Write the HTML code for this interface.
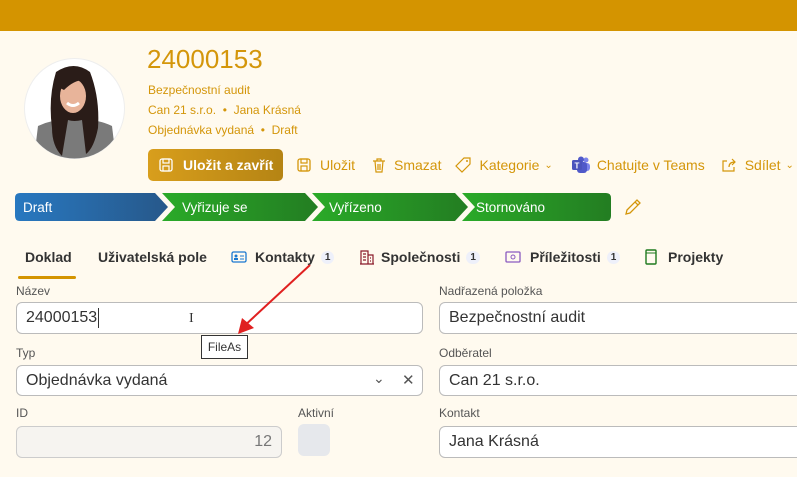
<!DOCTYPE html>
<html><head><meta charset="utf-8"><style>
*{box-sizing:border-box;margin:0;padding:0}
body{width:797px;height:477px;overflow:hidden;background:#fffaef;font-family:"Segoe UI","Liberation Sans",sans-serif;position:relative;color:#333}
.a{position:absolute;white-space:nowrap}
.gold{color:#d4960a}
.lbl{font-size:12px;color:#555}
.inp{position:absolute;border:1px solid #bbb;border-radius:6px;background:#fff;font-size:16px;color:#333;padding-left:9px;display:flex;align-items:center}
.tab{font-size:14px;font-weight:bold;color:#333}
.badge{display:inline-block;background:#eef0fa;border-radius:7px;font-size:10px;padding:1px 4px;margin-left:6px;color:#333;vertical-align:2px}
</style></head><body>
<div class="a" style="left:0;top:0;width:797px;height:31px;background:#d49400"></div>

<svg class="a" style="left:24px;top:58px" width="101" height="101" viewBox="0 0 101 101">
<defs><clipPath id="c"><circle cx="50.5" cy="50.5" r="50"/></clipPath></defs>
<circle cx="50.5" cy="50.5" r="50" fill="#fff" stroke="#eee"/>
<g clip-path="url(#c)">
<path d="M10 101 L14 68 Q30 60 50 62 Q72 60 88 68 L92 101Z" fill="#7a7a7a"/>
<path d="M32 14 Q50 2 66 14 Q76 40 74 70 Q70 90 62 96 L58 62 Q50 64 44 62 L38 98 Q28 88 28 70 Q24 40 32 14Z" fill="#2a1c18"/>
<ellipse cx="49" cy="38" rx="13" ry="17" fill="#e8b49a"/>
<path d="M36 30 Q40 16 60 22 Q50 22 40 32Z" fill="#2a1c18"/>
<path d="M43 45 Q49 50 55 45" stroke="#fff" stroke-width="3" fill="none"/>
</g></svg>

<div class="a gold" style="left:147px;top:44px;font-size:26px">24000153</div>
<div class="a gold" style="left:148px;top:83px;font-size:12px">Bezpečnostní audit</div>
<div class="a gold" style="left:148px;top:103px;font-size:12px">Can 21 s.r.o. &nbsp;•&nbsp; Jana Krásná</div>
<div class="a gold" style="left:148px;top:123px;font-size:12px">Objednávka vydaná &nbsp;•&nbsp; Draft</div>

<div class="a" style="left:148px;top:149px;width:135px;height:32px;border-radius:5px;background:linear-gradient(90deg,#d89e1c,#b58414);color:#fff;font-size:14px;font-weight:bold;display:flex;align-items:center;padding-left:10px">
<svg width="16" height="16" viewBox="0 0 16 16" style="margin-right:9px"><rect x="2" y="2" width="12" height="12" rx="2" fill="none" stroke="#fff" stroke-width="1.3"/><rect x="5" y="2" width="6" height="4" fill="none" stroke="#fff" stroke-width="1.2"/><rect x="5" y="9" width="6" height="5" fill="none" stroke="#fff" stroke-width="1.2"/></svg>Uložit a zavřít</div>

<div class="a gold" style="left:296px;top:156px;font-size:14px;display:flex;align-items:center">
<svg width="16" height="16" viewBox="0 0 16 16" style="margin-right:8px"><rect x="2" y="2" width="12" height="12" rx="2" fill="none" stroke="#d4960a" stroke-width="1.3"/><rect x="5" y="2" width="6" height="4" fill="none" stroke="#d4960a" stroke-width="1.2"/><rect x="5" y="9" width="6" height="5" fill="none" stroke="#d4960a" stroke-width="1.2"/></svg>Uložit
<svg width="16" height="16" viewBox="0 0 16 16" style="margin:0 7px 0 16px"><path d="M2 4h12M6 4V2h4v2M4 4l1 11h6l1-11M7 7v6M9 7v6" fill="none" stroke="#d4960a" stroke-width="1.2"/></svg>Smazat
<svg width="16" height="16" viewBox="0 0 16 16" style="margin:0 8px 0 14px"><path d="M9 1h6v6l-8 8-6-6z" fill="none" stroke="#d4960a" stroke-width="1.2"/><circle cx="12" cy="4" r="1" fill="#d4960a"/></svg>Kategorie <span style="font-size:10px;margin-left:5px">⌄</span>
<svg width="20" height="18" viewBox="0 0 20 18" style="margin:0 6px 0 18px"><circle cx="15" cy="4" r="2.5" fill="#7b83eb"/><rect x="11" y="7" width="8" height="8" rx="3" fill="#7b83eb"/><circle cx="10" cy="3.5" r="3" fill="#5059c9"/><rect x="6" y="6" width="10" height="11" rx="3" fill="#5059c9"/><rect x="1" y="4" width="10" height="10" rx="1.5" fill="#4b53bc"/><text x="6" y="12.5" font-size="8" fill="#fff" text-anchor="middle" font-family="Liberation Sans" font-weight="bold">T</text></svg>Chatujte v Teams
<svg width="16" height="16" viewBox="0 0 16 16" style="margin:0 8px 0 16px"><path d="M6 4H2v10h11v-4M8 10q0-5 6-5M11 2l3 3-3 3" fill="none" stroke="#d4960a" stroke-width="1.2"/></svg>Sdílet <span style="font-size:10px;margin-left:5px">⌄</span></div>

<svg class="a" style="left:15px;top:193px" width="600" height="28" viewBox="0 0 600 28">
<defs>
<linearGradient id="b" x1="0" x2="1"><stop offset="0" stop-color="#2878c0"/><stop offset="1" stop-color="#27588a"/></linearGradient>
<linearGradient id="g" x1="0" x2="1"><stop offset="0" stop-color="#2aaa28"/><stop offset="1" stop-color="#237d22"/></linearGradient>
</defs>
<path d="M5 0H140L153 14L140 28H5Q0 28 0 23V5Q0 0 5 0Z" fill="url(#b)"/>
<path d="M147 0H290L303 14L290 28H147L160 14Z" fill="url(#g)"/>
<path d="M297 0H440L453 14L440 28H297L310 14Z" fill="url(#g)"/>
<path d="M447 0H591Q596 0 596 5V23Q596 28 591 28H447L460 14Z" fill="url(#g)"/>
<g font-family="Segoe UI,Liberation Sans,sans-serif" font-size="13.5" fill="#fff">
<text x="8" y="19">Draft</text><text x="167" y="19">Vyřizuje se</text><text x="314" y="19">Vyřízeno</text><text x="461" y="19">Stornováno</text></g>
</svg>
<svg class="a" style="left:624px;top:198px" width="18" height="18" viewBox="0 0 18 18"><path d="M2 16l1-4L13 2l3 3L6 15z M11 4l3 3" fill="none" stroke="#d4960a" stroke-width="1.3"/></svg>

<div class="a tab" style="left:25px;top:249px">Doklad</div>
<div class="a" style="left:18px;top:276px;width:58px;height:3px;background:#d49400;border-radius:2px"></div>
<div class="a tab" style="left:98px;top:249px">Uživatelská pole</div>
<div class="a tab" style="left:231px;top:249px;display:flex;align-items:center">
<svg width="16" height="12" viewBox="0 0 16 12" style="margin-right:8px"><rect x="1" y="1" width="14" height="10" rx="1.5" fill="none" stroke="#1a78d0" stroke-width="1.3"/><circle cx="5" cy="5" r="1.5" fill="#1a78d0"/><rect x="3" y="7" width="4" height="2" fill="#1a78d0"/><path d="M9 5h4M9 8h4" stroke="#1a78d0"/></svg>Kontakty<span class="badge">1</span></div>
<div class="a tab" style="left:359px;top:249px;display:flex;align-items:center">
<svg width="16" height="16" viewBox="0 0 16 16" style="margin-right:6px"><path d="M2 15V2h7v13M9 6h5v9M1 15h14M4 5h3M4 8h3M4 11h3M11 9h1M11 12h1" fill="none" stroke="#8b1a2a" stroke-width="1.2"/></svg>Společnosti<span class="badge">1</span></div>
<div class="a tab" style="left:505px;top:249px;display:flex;align-items:center">
<svg width="16" height="14" viewBox="0 0 16 14" style="margin-right:9px"><rect x="1" y="2" width="14" height="10" rx="1" fill="none" stroke="#8a5bc0" stroke-width="1.3"/><circle cx="8" cy="7" r="2" fill="none" stroke="#8a5bc0"/></svg>Příležitosti<span class="badge">1</span></div>
<div class="a tab" style="left:645px;top:249px;display:flex;align-items:center">
<svg width="12" height="16" viewBox="0 0 12 16" style="margin-right:11px"><rect x="1" y="1" width="10" height="14" rx="1" fill="none" stroke="#1f7a1f" stroke-width="1.4"/><path d="M1 4h10" stroke="#1f7a1f"/></svg>Projekty</div>

<div class="a lbl" style="left:16px;top:284px">Název</div>
<div class="inp" style="left:16px;top:302px;width:407px;height:32px">24000153<span style="border-left:1px solid #333;height:20px;margin-left:1px"></span></div>
<div class="a" style="left:189px;top:311px;font-size:14px;font-family:'Liberation Serif',serif;color:#333">I</div>
<div class="a lbl" style="left:439px;top:284px">Nadřazená položka</div>
<div class="inp" style="left:439px;top:302px;width:370px;height:32px">Bezpečnostní audit</div>

<svg class="a" style="left:230px;top:262px" width="85" height="75" viewBox="0 0 85 75"><path d="M80 3L12 66" stroke="#e02020" stroke-width="2"/><path d="M8 72L12 56L24 66Z" fill="#e02020"/></svg>
<div class="a" style="left:201px;top:335px;width:47px;height:24px;border:1px solid #333;background:#fff;font-size:12px;display:flex;align-items:center;justify-content:center">FileAs</div>

<div class="a lbl" style="left:16px;top:346px">Typ</div>
<div class="inp" style="left:16px;top:365px;width:407px;height:31px">Objednávka vydaná
<span style="position:absolute;left:356px;top:4px;font-size:14px;color:#555">⌄</span><span style="position:absolute;left:385px;top:5px;font-size:15px;color:#555">✕</span></div>
<div class="a lbl" style="left:439px;top:346px">Odběratel</div>
<div class="inp" style="left:439px;top:365px;width:370px;height:31px">Can 21 s.r.o.</div>

<div class="a lbl" style="left:16px;top:406px">ID</div>
<div class="inp" style="left:16px;top:426px;width:266px;height:32px;background:#f6f4f0;border-color:#ccc;justify-content:flex-end;padding-right:9px;color:#777">12</div>
<div class="a lbl" style="left:298px;top:406px">Aktivní</div>
<div class="a" style="left:298px;top:424px;width:32px;height:32px;border-radius:6px;background:#e6e8ec"></div>
<div class="a lbl" style="left:439px;top:406px">Kontakt</div>
<div class="inp" style="left:439px;top:426px;width:370px;height:32px">Jana Krásná</div>
</body></html>
